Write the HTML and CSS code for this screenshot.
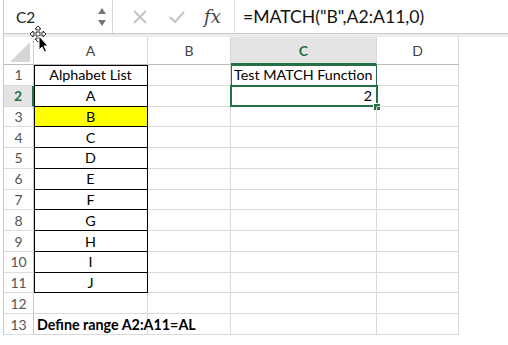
FILE: index.html
```html
<!DOCTYPE html>
<html>
<head>
<meta charset="utf-8">
<link rel="stylesheet" href="styles.css">
</head>
<body>
<div class="app">
  <div class="fbar">
    <div class="namebox">
      <span class="name">C2</span>
      <svg class="spin" width="10" height="22" viewBox="0 0 10 22"><path d="M1 8 L5 2 L9 8 Z" fill="#777"/><path d="M1 14 L9 14 L5 20 Z" fill="#777"/></svg>
    </div>
    <div class="fbtns">
      <svg class="ico x" width="16" height="16" viewBox="0 0 16 16"><path d="M2 2 L14 14 M14 2 L2 14" stroke="#c4c4c4" stroke-width="2" fill="none"/></svg>
      <svg class="ico chk" width="18" height="16" viewBox="0 0 18 16"><path d="M2 8 L7 13 L16 3" stroke="#c4c4c4" stroke-width="2" fill="none"/></svg>
      <span class="fx">fx</span>
    </div>
    <div class="formula">=MATCH("B",A2:A11,0)</div>
  </div>
  <div class="band"></div>
  <div class="sheet">
    <div class="grid">
      <div class="corner"><svg width="28" height="26" viewBox="0 0 28 26"><path d="M26 4 L26 24 L6 24 Z" fill="#d6d6d6"/></svg></div>
      <div class="ch">A</div>
      <div class="ch">B</div>
      <div class="ch sel">C</div>
      <div class="ch">D</div>

      <div class="rh">1</div><div class="c a a1">Alphabet List</div><div class="c"></div><div class="c c1">Test MATCH Function</div><div class="c"></div>
      <div class="rh sel">2</div><div class="c a">A</div><div class="c"></div><div class="c c2">2<span class="selbox"></span><span class="handle"></span></div><div class="c"></div>
      <div class="rh">3</div><div class="c a yel">B</div><div class="c"></div><div class="c"></div><div class="c"></div>
      <div class="rh">4</div><div class="c a">C</div><div class="c"></div><div class="c"></div><div class="c"></div>
      <div class="rh">5</div><div class="c a">D</div><div class="c"></div><div class="c"></div><div class="c"></div>
      <div class="rh">6</div><div class="c a">E</div><div class="c"></div><div class="c"></div><div class="c"></div>
      <div class="rh">7</div><div class="c a">F</div><div class="c"></div><div class="c"></div><div class="c"></div>
      <div class="rh">8</div><div class="c a">G</div><div class="c"></div><div class="c"></div><div class="c"></div>
      <div class="rh">9</div><div class="c a">H</div><div class="c"></div><div class="c"></div><div class="c"></div>
      <div class="rh">10</div><div class="c a">I</div><div class="c"></div><div class="c"></div><div class="c"></div>
      <div class="rh">11</div><div class="c a">J</div><div class="c"></div><div class="c"></div><div class="c"></div>
      <div class="rh">12</div><div class="c"></div><div class="c"></div><div class="c"></div><div class="c"></div>
      <div class="rh">13</div><div class="c bold">Define range A2:A11=AL</div><div class="c"></div><div class="c"></div><div class="c"></div>
    </div>
  </div>
  <svg class="cursor" width="30" height="30" viewBox="0 0 30 30">
    <g fill="#fff" stroke="#000" stroke-width="0.8">
      <path d="M10 1 L13 4 L11 4 L11 8 L15 8 L15 6 L18 9 L15 12 L15 10 L11 10 L11 14 L13 14 L10 17 L7 14 L9 14 L9 10 L5 10 L5 12 L2 9 L5 6 L5 8 L9 8 L9 4 L7 4 Z"/>
    </g>
    <path d="M11 11 L11 25 L14 22 L16.5 27 L18.5 26 L16 21 L20 21 Z" fill="#000" stroke="#fff" stroke-width="1"/>
  </svg>
</div>
</body>
</html>
```
FILE: styles.css
```css
html, body { margin: 0; padding: 0; background: #fff; }
body { width: 508px; height: 345px; overflow: hidden; font-family: Lato, "Open Sans", sans-serif; }
.app { position: relative; width: 508px; height: 345px; }
.fbar { height: 33px; display: flex; align-items: center; margin-left: 3px; border-left: 1px solid #c8c8c8; }
.namebox { width: 109px; height: 33px; display: flex; align-items: center; justify-content: space-between; border-right: 1px solid #d8d8d8; box-sizing: border-box; padding: 0 5px 0 12px; }
.name { font-family: Lato, "Open Sans", sans-serif; font-size: 15.5px; color: #222; }
.fbtns { display: flex; align-items: center; height: 33px; width: 122px; border-right: 1px solid #e0e0e0; box-sizing: border-box; padding-left: 19px; gap: 22px; }
.ico.chk { margin-left: -2px; }
.fx { font-family: "DejaVu Serif", "Liberation Serif", serif; font-style: italic; font-size: 18px; color: #444; margin-left: -4px; }
.formula { font-family: Lato, "Open Sans", sans-serif; font-size: 17.6px; color: #111; padding-left: 8px; }
.band { height: 3px; margin-left: 3px; border-top: 1px solid #c9c9c9; background: #ececec; border-left: 1px solid #c8c8c8; }
.sheet { margin-left: 3px; border-left: 1px solid #c8c8c8; width: 456px; }
.grid { display: grid; grid-template-columns: 30px 114px 83px 146px 82px; grid-template-rows: 28px repeat(13, 20.77px); }
.corner { border-right: 1px solid #d0d0d0; border-bottom: 1px solid #bdbdbd; display: flex; align-items: flex-end; box-sizing: border-box; }
.ch { border-right: 1px solid #d8d8d8; border-bottom: 1px solid #bdbdbd; box-sizing: border-box; display: flex; align-items: center; justify-content: center; font-family: Lato, "Open Sans", sans-serif; font-size: 14px; color: #444; }
.ch.sel { color: #217346; font-weight: bold; background: #e4e4e4; border-bottom: 2px solid #217346; }
.rh { border-right: 1px solid #c8c8c8; border-bottom: 1px solid #dcdcdc; box-sizing: border-box; display: flex; align-items: center; justify-content: center; font-family: Lato, "Open Sans", sans-serif; font-size: 14px; color: #555; }
.rh.sel { color: #217346; font-weight: bold; background: #e4e4e4; border-right: 2px solid #217346; }
.c { position: relative; border-right: 1px solid #d9d9d9; border-bottom: 1px solid #d9d9d9; box-sizing: border-box; display: flex; align-items: center; font-size: 14.3px; color: #000; padding: 0 3px; white-space: nowrap; }
.c.a { justify-content: center; border-right-color: #000; border-bottom-color: #000; box-shadow: inset 1px 0 0 #000; }
.c.a1 { box-shadow: inset 1px 1px 0 #000; }
.c.yel { background: #ffff00; }
.c.c1 { box-shadow: inset 1px 1px 0 #2d6a48; border-right-color: #2d6a48; padding-left: 3px; }
.c.c2 { justify-content: flex-end; padding-right: 4px; }
.c.bold { font-weight: bold; overflow: visible; }
.selbox { position: absolute; left: -1px; top: -1px; right: -2px; bottom: -1px; border: 2px solid #217346; }
.handle { position: absolute; right: -5px; bottom: -5px; width: 6px; height: 6px; background: #217346; border: 1px solid #fff; }
.cursor { position: absolute; left: 28px; top: 25px; }
```
